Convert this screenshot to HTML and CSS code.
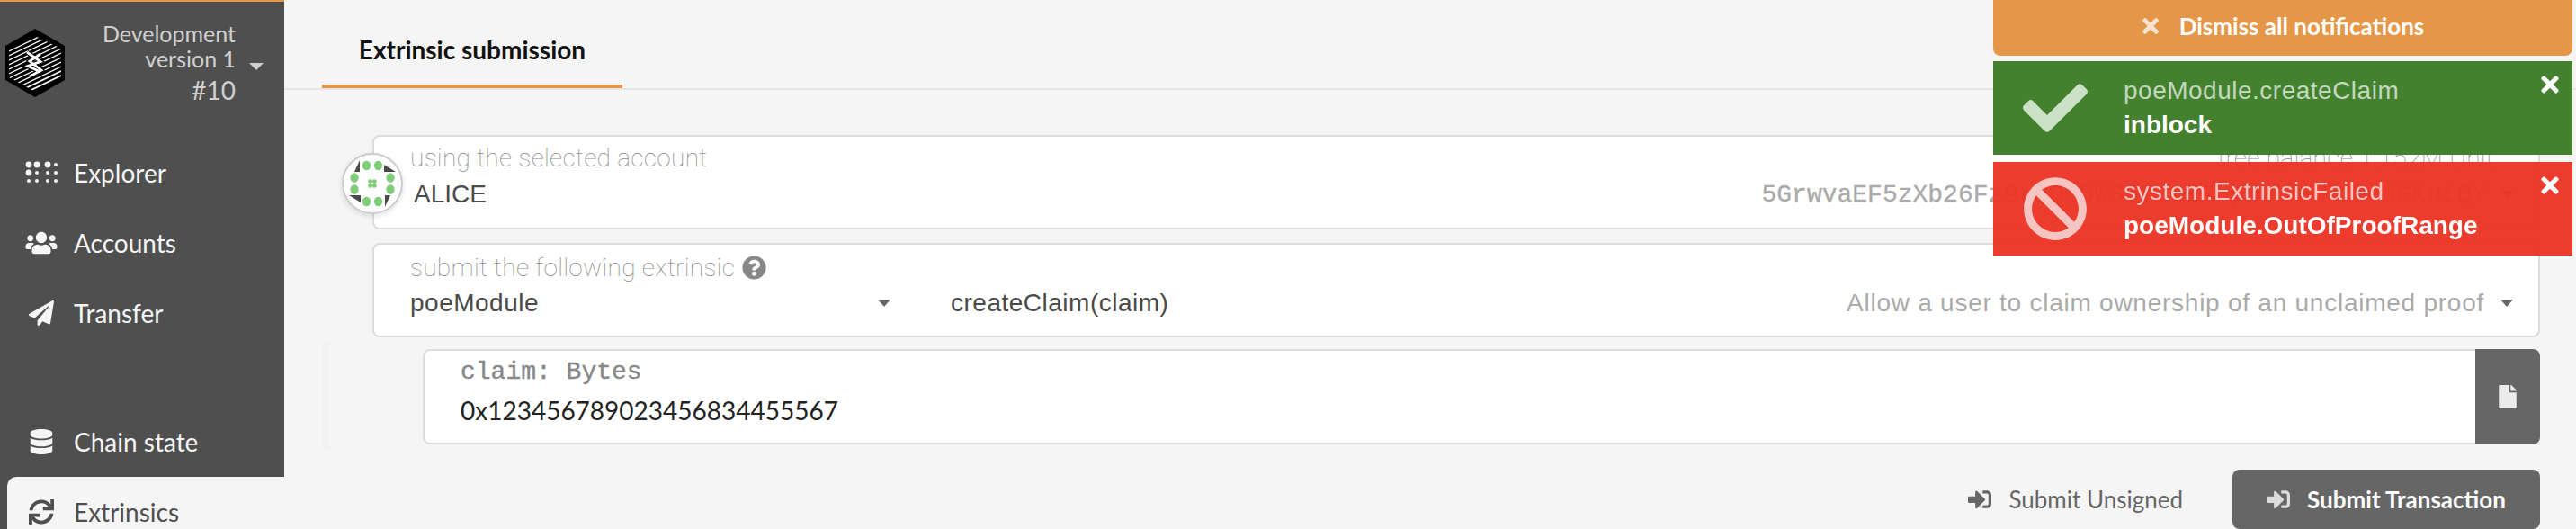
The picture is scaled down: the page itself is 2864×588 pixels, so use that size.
FILE: index.html

```html
<!doctype html>
<html lang="en">
<head>
    <meta charset="utf-8"/>
    <title>Extrinsic submission</title>
    <link rel="stylesheet" href="styles.css">
</head>
<body>

<div class="app">
    <!-- left menu -->
    <div class="side">
        <div class="chain">
            <svg class="logo" viewBox="0 0 78 92">
                <defs><clipPath id="hex"><polygon points="39,8 68,22 68,54 39,70 10,54 10,22"/></clipPath></defs>
                <polygon points="39,0 72,19 72,57 39,76 6,57 6,19" fill="#000"/>
                <g stroke="#fff" stroke-width="1.3" clip-path="url(#hex)">
                    <line x1="10" y1="25" x2="68" y2="-3"/>
                    <line x1="10" y1="30" x2="68" y2="2"/>
                    <line x1="10" y1="35" x2="68" y2="7"/>
                    <line x1="10" y1="40" x2="68" y2="12"/>
                    <line x1="10" y1="45" x2="68" y2="17"/>
                    <line x1="10" y1="50" x2="68" y2="22"/>
                    <line x1="10" y1="55" x2="68" y2="27"/>
                    <line x1="10" y1="60" x2="68" y2="32"/>
                    <line x1="10" y1="65" x2="68" y2="37"/>
                    <line x1="10" y1="70" x2="68" y2="42"/>
                    <line x1="10" y1="75" x2="68" y2="47" stroke-width="1.7"/>
                    <line x1="10" y1="80" x2="68" y2="52" stroke-width="1.7"/>
                </g>
                <path d="M30 26 L45 36.5 L31 41.5 L45 48 M45 28 L33 36 L46 46 L33 53" fill="none" stroke="#000" stroke-width="5"/>
                <path d="M30 26 L45 36.5 L31 41.5 L45 48 M45 28 L33 36 L46 46 L33 53" fill="none" stroke="#fff" stroke-width="2.8"/>
            </svg>
            <div class="chain-info">
                <div class="chain-name">Development</div>
                <div class="chain-name">version 1</div>
                <div class="chain-no">#10</div>
            </div>
            <span class="caret caret-light"></span>
        </div>

        <a class="item">
            <svg class="ico" viewBox="0 0 36 24"><g fill="#f5f5f5">
                <circle cx="4" cy="3" r="3.4"/><circle cx="13" cy="3" r="3.4"/><circle cx="25" cy="3" r="3.4"/><circle cx="34" cy="3" r="2"/>
                <circle cx="4" cy="12" r="3.4"/><circle cx="13" cy="12" r="2"/><circle cx="25" cy="12" r="2"/><circle cx="34" cy="12" r="2"/>
                <circle cx="4" cy="21" r="2"/><circle cx="13" cy="21" r="2"/><circle cx="25" cy="21" r="2"/><circle cx="34" cy="21" r="2"/>
            </g></svg>
            <span>Explorer</span>
        </a>
        <a class="item">
            <svg class="ico" viewBox="0 0 640 512"><path fill="#f5f5f5" d="M96 224c35.3 0 64-28.7 64-64s-28.7-64-64-64-64 28.7-64 64 28.7 64 64 64zm448 0c35.3 0 64-28.7 64-64s-28.7-64-64-64-64 28.7-64 64 28.7 64 64 64zm32 32h-64c-17.6 0-33.5 7.1-45.1 18.6 40.3 22.1 68.9 62 75.1 109.4h66c17.7 0 32-14.3 32-32v-32c0-35.3-28.7-64-64-64zm-256 0c61.9 0 112-50.1 112-112S381.9 32 320 32 208 82.1 208 144s50.1 112 112 112zm76.8 32h-8.3c-20.8 10-43.9 16-68.5 16s-47.6-6-68.5-16h-8.3C179.6 288 128 339.6 128 403.2V432c0 26.5 21.5 48 48 48h288c26.5 0 48-21.5 48-48v-28.8c0-63.6-51.6-115.2-115.2-115.2zm-223.7-13.4C161.5 263.1 145.6 256 128 256H64c-35.3 0-64 28.7-64 64v32c0 17.7 14.3 32 32 32h65.9c6.3-47.4 34.9-87.3 75.2-109.4z"/></svg>
            <span>Accounts</span>
        </a>
        <a class="item">
            <svg class="ico" viewBox="0 0 512 512"><path fill="#f5f5f5" d="M476 3.2L12.5 270.6c-18.1 10.4-15.8 35.6 2.2 43.2L121 358.4l287.3-253.2c5.5-4.9 13.3 2.6 8.6 8.3L176 407v80.5c0 23.6 28.5 32.9 42.5 15.8L282 426l124.6 52.2c14.2 6 30.4-2.9 33-18.2l72-432C515 7.8 493.3-6.8 476 3.2z"/></svg>
            <span>Transfer</span>
        </a>
        <div class="side-gap"></div>
        <a class="item">
            <svg class="ico" viewBox="0 0 448 512"><path fill="#f5f5f5" d="M448 73.143v45.714C448 159.143 347.667 192 224 192S0 159.143 0 118.857V73.143C0 32.857 100.333 0 224 0s224 32.857 224 73.143zM448 176v102.857C448 319.143 347.667 352 224 352S0 319.143 0 278.857V176c48.125 33.143 136.208 48.572 224 48.572S399.874 209.143 448 176zm0 160v102.857C448 479.143 347.667 512 224 512S0 479.143 0 438.857V336c48.125 33.143 136.208 48.572 224 48.572S399.874 369.143 448 336z"/></svg>
            <span>Chain state</span>
        </a>
        <a class="item active">
            <svg class="ico" viewBox="0 0 512 512"><path fill="#4f4f4f" d="M440.65 12.57l4 82.77A247.16 247.16 0 0 0 255.83 8C134.73 8 33.91 94.92 12.29 209.82A12 12 0 0 0 24.09 224h49.05a12 12 0 0 0 11.67-9.26 175.91 175.91 0 0 1 317-56.94l-101.46-4.86a12 12 0 0 0-12.57 12v47.41a12 12 0 0 0 12 12H500a12 12 0 0 0 12-12V12a12 12 0 0 0-12-12h-47.37a12 12 0 0 0-11.98 12.57zM255.83 432a175.61 175.61 0 0 1-146-77.8l101.8 4.87a12 12 0 0 0 12.57-12v-47.4a12 12 0 0 0-12-12H12a12 12 0 0 0-12 12V500a12 12 0 0 0 12 12h47.35a12 12 0 0 0 12-12.6l-4.15-82.57A247.17 247.17 0 0 0 255.83 504c121.11 0 221.93-86.92 243.55-201.82a12 12 0 0 0-11.8-14.18h-49.05a12 12 0 0 0-11.67 9.26A175.86 175.86 0 0 1 255.83 432z"/></svg>
            <span>Extrinsics</span>
        </a>
    </div>

    <!-- main content -->
    <div class="main">
        <div class="tabs">
            <div class="tab">Extrinsic submission</div>
        </div>

        <div class="card card-account">
            <div class="avatar">
                <svg viewBox="-32 -32 64 64">
                    <g fill="#7fcd77">
                        <ellipse cx="-6.5" cy="-20" rx="4.6" ry="5.3"/><ellipse cx="6.5" cy="-20" rx="4.6" ry="5.3"/>
                        <ellipse cx="-20" cy="-6.5" rx="4.6" ry="5.3"/><ellipse cx="20" cy="-6.5" rx="4.6" ry="5.3"/>
                        <ellipse cx="-20" cy="6.5" rx="4.6" ry="5.3"/><ellipse cx="20" cy="6.5" rx="4.6" ry="5.3"/>
                        <ellipse cx="-6.5" cy="20" rx="4.6" ry="5.3"/><ellipse cx="6.5" cy="20" rx="4.6" ry="5.3"/>
                        <circle cx="-2.4" cy="-2.4" r="2.4"/><circle cx="2.4" cy="-2.4" r="2.4"/>
                        <circle cx="-2.4" cy="2.4" r="2.4"/><circle cx="2.4" cy="2.4" r="2.4"/>
                    </g>
                    <g fill="#4a4a4a">
                        <polygon points="-14,-26 -20,-13 -14,-13"/>
                        <polygon points="13,-21 26,-13 13,-13"/>
                        <polygon points="14,26 20,13 14,13"/>
                        <polygon points="-13,21 -26,13 -13,13"/>
                    </g>
                </svg>
            </div>
            <div class="card-top">
                <span class="label">using the selected account</span>
                <span class="label">free balance 1.152M Unit</span>
            </div>
            <div class="card-row">
                <span class="value value-name">ALICE</span>
                <span class="address">5GrwvaEF5zXb26Fz9rcQpDWS57CtERHpNehXCPcNoHGKutQY</span>
                <span class="caret"></span>
            </div>
        </div>

        <div class="card card-call">
            <div class="card-top">
                <span class="label">submit the following extrinsic
                    <svg class="help" viewBox="0 0 512 512"><path fill="#888" d="M504 256c0 136.997-111.043 248-248 248S8 392.997 8 256C8 119.083 119.043 8 256 8s248 111.083 248 248zM262.655 90c-54.497 0-89.255 22.957-116.549 63.758-3.536 5.286-2.353 12.415 2.715 16.258l34.699 26.31c5.205 3.947 12.621 3.008 16.665-2.122 17.864-22.658 30.113-35.797 57.303-35.797 20.429 0 45.698 13.148 45.698 32.958 0 14.976-12.363 22.667-32.534 33.976C247.128 238.528 216 254.941 216 296v4c0 6.627 5.373 12 12 12h56c6.627 0 12-5.373 12-12v-1.333c0-28.462 83.186-29.647 83.186-106.667 0-58.002-60.165-102-116.531-102zM256 338c-25.365 0-46 20.635-46 46 0 25.364 20.635 46 46 46s46-20.636 46-46c0-25.365-20.635-46-46-46z"/></svg>
                </span>
            </div>
            <div class="card-row">
                <div class="sel-module">
                    <span class="value">poeModule</span>
                    <span class="caret"></span>
                </div>
                <span class="value value-method">createClaim(claim)</span>
                <span class="desc">Allow a user to claim ownership of an unclaimed proof</span>
                <span class="caret"></span>
            </div>
        </div>

        <div class="params">
            <div class="param">
                <div class="param-body">
                    <div class="mono-label">claim: Bytes</div>
                    <div class="param-value">0x123456789023456834455567</div>
                </div>
                <div class="param-btn">
                    <svg viewBox="0 0 384 512"><path fill="#ececec" d="M224 136V0H24C10.7 0 0 10.7 0 24v464c0 13.3 10.7 24 24 24h336c13.3 0 24-10.7 24-24V160H248c-13.2 0-24-10.8-24-24zm160-14.1v6.1H256V0h6.1c6.4 0 12.5 2.5 17 7l97.9 98c4.5 4.5 7 10.6 7 16.9z"/></svg>
                </div>
            </div>
        </div>

        <div class="actions">
            <div class="btn-plain">
                <svg viewBox="0 0 512 512"><path fill="#666" d="M416 448h-84c-6.6 0-12-5.4-12-12v-40c0-6.6 5.4-12 12-12h84c17.7 0 32-14.3 32-32V160c0-17.7-14.3-32-32-32h-84c-6.6 0-12-5.4-12-12V76c0-6.6 5.4-12 12-12h84c53 0 96 43 96 96v192c0 53-43 96-96 96zm-47-201L201 79c-15-15-41-4.5-41 17v96H24c-13.3 0-24 10.7-24 24v96c0 13.3 10.7 24 24 24h136v96c0 21.5 26 32 41 17l168-168c9.3-9.4 9.3-24.6 0-34z"/></svg>
                <span>Submit Unsigned</span>
            </div>
            <div class="btn-main">
                <svg viewBox="0 0 512 512"><path fill="#ddd" d="M416 448h-84c-6.6 0-12-5.4-12-12v-40c0-6.6 5.4-12 12-12h84c17.7 0 32-14.3 32-32V160c0-17.7-14.3-32-32-32h-84c-6.6 0-12-5.4-12-12V76c0-6.6 5.4-12 12-12h84c53 0 96 43 96 96v192c0 53-43 96-96 96zm-47-201L201 79c-15-15-41-4.5-41 17v96H24c-13.3 0-24 10.7-24 24v96c0 13.3 10.7 24 24 24h136v96c0 21.5 26 32 41 17l168-168c9.3-9.4 9.3-24.6 0-34z"/></svg>
                <span>Submit Transaction</span>
            </div>
        </div>
    </div>
</div>

<!-- notifications, over the page -->
<div class="notes">
    <div class="note-all">
        <svg viewBox="0 0 352 512"><path fill="#f5e2d0" d="M242.72 256l100.07-100.07c12.28-12.28 12.28-32.19 0-44.48l-22.24-22.24c-12.28-12.28-32.19-12.28-44.48 0L176 189.28 75.93 89.21c-12.28-12.28-32.19-12.28-44.48 0L9.21 111.45c-12.28 12.28-12.28 32.19 0 44.48L109.28 256 9.21 356.07c-12.28 12.28-12.28 32.19 0 44.48l22.24 22.24c12.28 12.28 32.2 12.28 44.48 0L176 322.72l100.07 100.07c12.28 12.28 32.2 12.28 44.48 0l22.24-22.24c12.28-12.28 12.28-32.19 0-44.48L242.72 256z"/></svg>
        <span>Dismiss all notifications</span>
    </div>
    <div class="note note-ok">
        <svg class="note-ico" viewBox="0 0 512 512"><path fill="#cbdfc5" d="M173.898 439.404l-166.4-166.4c-9.997-9.997-9.997-26.206 0-36.204l36.203-36.204c9.997-10.998 26.207-9.998 36.204 0L192 312.69 432.095 72.596c9.997-9.997 26.207-9.997 36.204 0l36.203 36.204c9.997 9.997 9.997 26.206 0 36.204l-294.4 294.401c-9.998 9.997-26.207 9.997-36.204-.001z"/></svg>
        <div class="note-text">
            <div class="note-title">poeModule.createClaim</div>
            <div class="note-status">inblock</div>
        </div>
        <svg class="note-x" viewBox="0 0 352 512"><path fill="#fff" d="M242.72 256l100.07-100.07c12.28-12.28 12.28-32.19 0-44.48l-22.24-22.24c-12.28-12.28-32.19-12.28-44.48 0L176 189.28 75.93 89.21c-12.28-12.28-32.19-12.28-44.48 0L9.21 111.45c-12.28 12.28-12.28 32.19 0 44.48L109.28 256 9.21 356.07c-12.28 12.28-12.28 32.19 0 44.48l22.24 22.24c12.28 12.28 32.2 12.28 44.48 0L176 322.72l100.07 100.07c12.28 12.28 32.2 12.28 44.48 0l22.24-22.24c12.28-12.28 12.28-32.19 0-44.48L242.72 256z"/></svg>
    </div>
    <div class="note note-err">
        <svg class="note-ico" viewBox="0 0 512 512"><path fill="#f6c4c0" d="M256 8C119.034 8 8 119.033 8 256s111.034 248 248 248 248-111.034 248-248S392.967 8 256 8zm130.108 117.892c65.448 65.448 70 165.481 20.677 235.637L150.47 105.216c70.204-49.356 170.226-44.735 235.638 20.676zM125.892 386.108c-65.448-65.448-70-165.481-20.677-235.637L361.53 406.784c-70.203 49.356-170.226 44.736-235.638-20.676z"/></svg>
        <div class="note-text">
            <div class="note-title">system.ExtrinsicFailed</div>
            <div class="note-status">poeModule.OutOfProofRange</div>
        </div>
        <svg class="note-x" viewBox="0 0 352 512"><path fill="#fff" d="M242.72 256l100.07-100.07c12.28-12.28 12.28-32.19 0-44.48l-22.24-22.24c-12.28-12.28-32.19-12.28-44.48 0L176 189.28 75.93 89.21c-12.28-12.28-32.19-12.28-44.48 0L9.21 111.45c-12.28 12.28-12.28 32.19 0 44.48L109.28 256 9.21 356.07c-12.28 12.28-12.28 32.19 0 44.48l22.24 22.24c12.28 12.28 32.2 12.28 44.48 0L176 322.72l100.07 100.07c12.28 12.28 32.2 12.28 44.48 0l22.24-22.24c12.28-12.28 12.28-32.19 0-44.48L242.72 256z"/></svg>
    </div>
</div>

</body>
</html>
```

FILE: styles.css

```css
* {
    box-sizing: border-box;
    margin: 0;
    padding: 0;
}
html, body {
    height: 588px;
    overflow: hidden;
}
body {
    background: #f5f5f5;
    font-family: Lato, "Liberation Sans", sans-serif;
    font-size: 28px;
    color: #4f4f4f;
}
.app {
    display: flex;
    height: 588px;
}

/* left menu */
.side {
    width: 316px;
    flex: none;
    height: 588px;
    background: #4f4f4f;
    border-top: 2px solid #e5964a;
    display: flex;
    flex-direction: column;
}
.chain {
    height: 151px;
    flex: none;
    display: flex;
    align-items: flex-start;
    color: #cfcfcf;
}
.logo {
    width: 78px;
    height: 92px;
    flex: none;
    margin-top: 30px;
}
.chain-info {
    width: 184px;
    text-align: right;
    padding-top: 21px;
}
.chain-name {
    font-size: 25px;
    line-height: 28px;
}
.chain-no {
    line-height: 28px;
    margin-top: 7px;
}
.caret {
    display: inline-block;
    width: 0;
    height: 0;
    border-left: 7px solid transparent;
    border-right: 7px solid transparent;
    border-top: 8px solid #666;
    flex: none;
}
.caret-light {
    border-left-width: 8px;
    border-right-width: 8px;
    border-top-color: #cfcfcf;
    margin: 68px 0 0 15px;
}
.item {
    height: 78px;
    flex: none;
    display: flex;
    align-items: center;
    color: #f5f5f5;
}
.item .ico {
    width: 36px;
    height: 28px;
    flex: none;
    margin: 0 18px 0 28px;
}
.side-gap {
    height: 65px;
    flex: none;
}
.item.active {
    margin-left: 8px;
    background: #f5f5f5;
    color: #4f4f4f;
    border-top-left-radius: 10px;
}
.item.active .ico {
    margin-left: 20px;
}

/* main */
.main {
    flex: 1;
    min-width: 0;
    padding-right: 40px;
}
.tabs {
    height: 100px;
    margin-right: -40px;
    border-bottom: 2px solid #e6e6e6;
    padding-left: 42px;
}
.tab {
    width: 334px;
    height: 98px;
    padding-top: 15px;
    border-bottom: 4px solid #e5964a;
    display: flex;
    align-items: center;
    justify-content: center;
    font-weight: 700;
    color: #111;
}
.card {
    background: #fff;
    border: 2px solid #ddd;
    border-radius: 8px;
    margin-left: 98px;
    height: 105px;
    padding: 5px 28px 0 40px;
    position: relative;
}
.card-account {
    margin-top: 50px;
}
.card-call {
    margin-top: 15px;
    padding-top: 7px;
}
.avatar {
    position: absolute;
    left: -36px;
    top: 18px;
    width: 68px;
    height: 68px;
    border-radius: 50%;
    border: 2px solid #ccc;
    background: rgba(255, 255, 255, .85);
    box-shadow: 0 2px 6px rgba(0, 0, 0, .12);
    overflow: hidden;
}
.avatar svg {
    display: block;
    width: 64px;
    height: 64px;
}
.card-top {
    display: flex;
    justify-content: space-between;
    height: 36px;
    padding-right: 21px;
    align-items: center;
}
.label {
    font-family: Roboto, "Liberation Sans", sans-serif;
    font-weight: 100;
    letter-spacing: .3px;
    color: #888;
    display: flex;
    align-items: center;
    gap: 8px;
}
.card-row {
    display: flex;
    align-items: center;
    height: 36px;
    margin-top: 5px;
}
.card-call .card-row {
    margin-top: 4px;
}
.value {
    font-family: "Liberation Sans", sans-serif;
    letter-spacing: .5px;
    color: #4a4a4a;
}
.value-name {
    letter-spacing: 0;
    margin-left: 4px;
}
.address {
    font-family: "Liberation Mono", monospace;
    -webkit-text-stroke: .3px #aaa;
    color: #aaa;
    margin-left: auto;
    margin-right: 15px;
}
.desc {
    font-family: "Liberation Sans", sans-serif;
    color: #aaa;
    letter-spacing: .75px;
    margin-left: auto;
    margin-right: 18px;
}
.sel-module {
    width: 534px;
    display: flex;
    align-items: center;
    justify-content: space-between;
}
.value-method {
    margin-left: 67px;
}
.help {
    width: 27px;
    height: 27px;
}

/* params */
.params {
    margin-top: 5px;
    border-left: 8px solid #f2f2f2;
    margin-left: 42px;
    padding: 8px 0 6px 104px;
}
.param {
    display: flex;
    height: 106px;
}
.param-body {
    flex: 1;
    background: #fff;
    border: 2px solid #ddd;
    border-right: 0;
    border-radius: 8px 0 0 8px;
    padding: 6px 0 0 40px;
}
.mono-label {
    font-family: "Liberation Mono", monospace;
    -webkit-text-stroke: .4px #888;
    color: #888;
    line-height: 36px;
}
.param-value {
    color: #222;
    line-height: 36px;
    margin-top: 6px;
}
.param-btn {
    width: 72px;
    background: #666;
    border-radius: 0 8px 8px 0;
    display: flex;
    align-items: center;
    justify-content: center;
}
.param-btn svg {
    width: 20px;
    height: 26px;
}

/* buttons */
.actions {
    display: flex;
    justify-content: flex-end;
    align-items: center;
    margin-top: 22px;
    height: 66px;
    font-size: 26px;
}
.actions svg {
    width: 26px;
    height: 26px;
    flex: none;
}
.btn-plain {
    display: flex;
    align-items: center;
    gap: 19px;
    color: #666;
    margin-right: 55px;
}
.btn-main {
    width: 342px;
    height: 66px;
    background: #666;
    color: #fff;
    font-weight: 700;
    border-radius: 8px;
    display: flex;
    align-items: center;
    justify-content: center;
    gap: 19px;
}

/* notifications */
.notes {
    position: fixed;
    top: 0;
    right: 4px;
    width: 644px;
    color: #fff;
    display: flex;
    flex-direction: column;
    gap: 8px;
    opacity: .97;
}
.note-all {
    height: 62px;
    margin-bottom: -2px;
    padding-bottom: 4px;
    background: #e49344;
    border-radius: 0 0 8px 8px;
    display: flex;
    align-items: center;
    justify-content: center;
    gap: 22px;
    font-weight: 700;
    font-size: 26px;
}
.note-all svg {
    width: 20px;
    height: 26px;
}
.note {
    height: 104px;
    display: flex;
    align-items: center;
    position: relative;
}
.note-ok {
    background: #3d7d29;
}
.note-err {
    background: #eb3628;
}
.note-ico {
    width: 72px;
    height: 72px;
    flex: none;
    margin: 0 40px 0 33px;
}
.note-title,
.note-status {
    font-family: "Liberation Sans", sans-serif;
    line-height: 38px;
}
.note-title {
    letter-spacing: .5px;
    color: rgba(255, 255, 255, .7);
}
.note-status {
    font-weight: 700;
}
.note-x {
    position: absolute;
    top: 12px;
    right: 14px;
    width: 22px;
    height: 28px;
}
```
